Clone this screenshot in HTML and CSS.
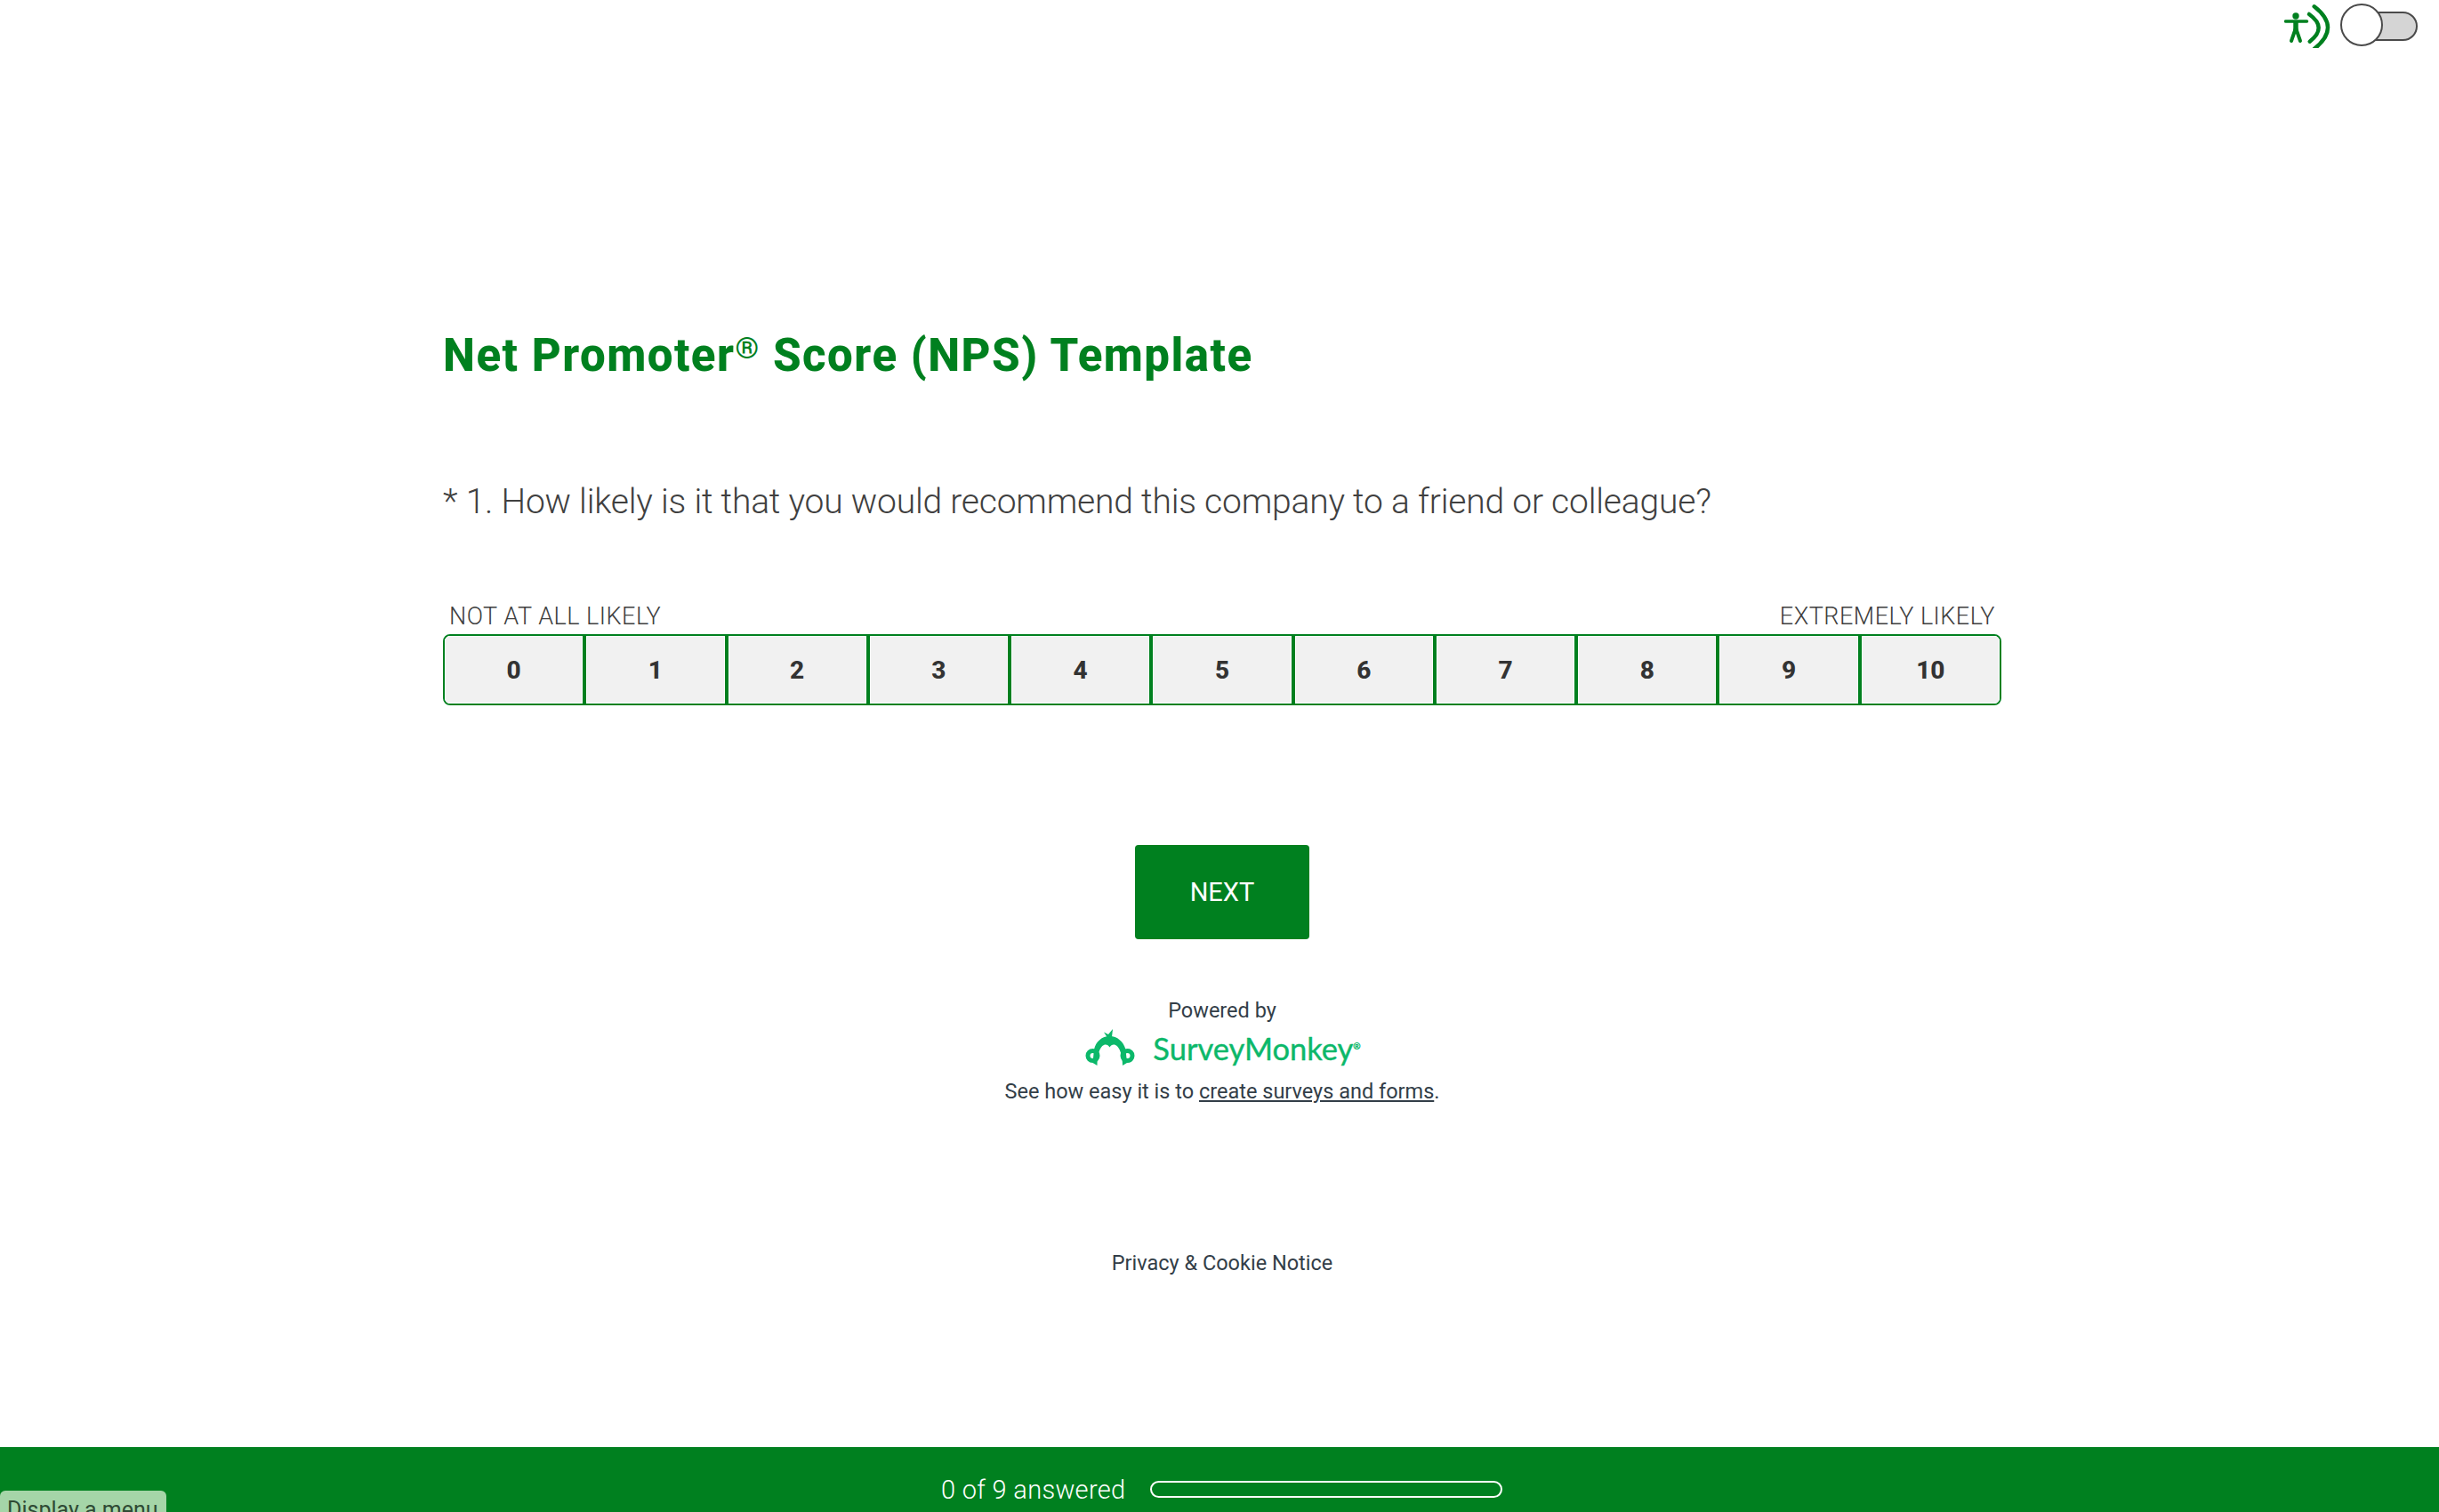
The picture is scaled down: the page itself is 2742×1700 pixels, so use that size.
FILE: index.html
```html
<!DOCTYPE html>
<html lang="en">
<head>
    <meta charset="UTF-8">
    <title>Net Promoter Score (NPS) Template</title>
    <link rel="stylesheet" href="styles.css">
</head>
<body>
    <!-- Accessibility toggle -->
    <div class="a11y-bar">
        <svg class="a11y-icon" width="52" height="52" viewBox="0 -4 52 52" fill="none">
            <circle cx="13" cy="12" r="3.700" fill="#00801f"/>
            <path d="M1.500 18 L25.500 18" stroke="#00801f" stroke-width="3.500" stroke-linecap="round"/>
            <path d="M13 18 V29" stroke="#00801f" stroke-width="5.500"/>
            <path d="M12.500 27 L8 40 M13.500 27 L18 40" stroke="#00801f" stroke-width="4" stroke-linecap="round"/>
            <path d="M28 10 Q49 25 28.700 40.700" stroke="#00801f" stroke-width="4.500" stroke-linecap="round"/>
            <path d="M33.700 1.300 Q64.300 25 33.700 49" stroke="#00801f" stroke-width="4.500" stroke-linecap="round"/>
        </svg>
        <div class="a11y-toggle">
            <span class="a11y-knob"></span>
        </div>
    </div>

    <main class="survey">
        <h1 class="survey-title">Net Promoter<sup class="reg">®</sup> Score (NPS) Template</h1>
        <p class="question">* 1. How likely is it that you would recommend this company to a friend or colleague?</p>

        <div class="scale-labels">
            <span>NOT AT ALL LIKELY</span>
            <span>EXTREMELY LIKELY</span>
        </div>
        <div class="scale">
            <button class="scale-item">0</button>
            <button class="scale-item">1</button>
            <button class="scale-item">2</button>
            <button class="scale-item">3</button>
            <button class="scale-item">4</button>
            <button class="scale-item">5</button>
            <button class="scale-item">6</button>
            <button class="scale-item">7</button>
            <button class="scale-item">8</button>
            <button class="scale-item">9</button>
            <button class="scale-item">10</button>
        </div>

        <div class="actions">
            <button class="next-btn">NEXT</button>
        </div>

        <div class="powered">
            <div class="powered-by">Powered by</div>
            <div class="brand">
                <svg class="brand-mark" width="60" height="44" viewBox="0 0 56 44">
                    <path fill="#0cb86a" d="M10 23 C12 14 19 8 27.500 8 C36 8 43 14 45.500 23 L47 38 L42 41 C42 30 39 20 34 18 C31.500 17 29 18 27.500 20.500 C26 18 23.500 17 21 18 C16 20 13.500 30 13.500 41 L8.500 38 Z"/>
                    <path fill="#0cb86a" d="M24.500 9 L21 3.500 L26 6 L31 0 L30 9 Z"/>
                    <circle cx="8.500" cy="30" r="5.500" fill="none" stroke="#0cb86a" stroke-width="5"/>
                    <circle cx="47.500" cy="30" r="5.500" fill="none" stroke="#0cb86a" stroke-width="5"/>
                </svg>
                <span class="brand-name">SurveyMonkey<sup class="brand-reg">®</sup></span>
            </div>
            <div class="powered-text">See how easy it is to <a href="#">create surveys and forms</a>.</div>
        </div>

        <div class="privacy">Privacy &amp; Cookie Notice</div>
    </main>

    <footer class="progress-bar">
        <span class="progress-text">0 of 9 answered</span>
        <span class="progress-track"></span>
    </footer>

    <button class="menu-btn">Display a menu</button>
</body>
</html>
```

FILE: styles.css
```css
/* NPS survey page */
html, body {
    height: 100%;
}

body {
    margin: 0;
    height: 1700px;
    overflow: hidden;
    display: flex;
    flex-direction: column;
    position: relative;
    background: #fff;
    color: #333e48;
    font-family: Roboto, "Liberation Sans", sans-serif;
}

.a11y-bar {
    display: flex;
    justify-content: flex-end;
    align-items: center;
    gap: 13px;
    height: 56px;
    padding: 0 24px 0 0;
}

.a11y-toggle {
    position: relative;
    width: 85px;
    height: 33px;
    margin-top: 3px;
    box-sizing: border-box;
    background: #d5d5d5;
    border: 2px solid #4a4a4a;
    border-radius: 17px;
}

.a11y-knob {
    position: absolute;
    left: -4px;
    top: -11px;
    width: 48px;
    height: 48px;
    box-sizing: border-box;
    background: #fff;
    border: 2px solid #4a4a4a;
    border-radius: 50%;
}

.survey {
    flex: 1;
    width: 1752px;
    margin-left: 498px;
}

.survey-title {
    margin: 314px 0 0;
    font-size: 51px;
    line-height: 60px;
    font-weight: 800;
    color: #00801f;
    letter-spacing: 1.5px;
}

.reg {
    font-size: 34px;
    line-height: 0;
    vertical-align: 14px;
}

.question {
    margin: 104px 0 0;
    font-size: 39px;
    line-height: 60px;
    font-weight: 300;
    color: #404040;
    letter-spacing: -0.2px;
}

.scale-labels {
    display: flex;
    justify-content: space-between;
    margin-top: 81px;
    padding: 0 7px 2px;
    font-size: 27px;
    line-height: 36px;
    font-weight: 300;
    letter-spacing: 0.5px;
    color: #404040;
}

.scale {
    display: flex;
    height: 80px;
    box-sizing: border-box;
    border: 2px solid #00801f;
    border-radius: 8px;
    overflow: hidden;
}

.scale-item {
    flex: 1;
    border: none;
    border-right: 4px solid #00801f;
    background: #f1f1f1;
    box-shadow: inset 0 0 0 1px #fff;
    font-family: inherit;
    font-size: 28px;
    font-weight: 800;
    color: #333;
}

.scale-item:last-child {
    border-right: none;
}

.actions {
    display: flex;
    justify-content: center;
    margin-top: 157px;
}

.next-btn {
    width: 196px;
    height: 106px;
    border: none;
    border-radius: 4px;
    background: #00801f;
    color: #fff;
    font-family: inherit;
    font-size: 29px;
}

.powered {
    margin-top: 64px;
    text-align: center;
    font-size: 23.500px;
    line-height: 32px;
    color: #333e48;
}

.brand {
    display: flex;
    justify-content: center;
    align-items: center;
    gap: 18px;
    height: 46px;
    margin-top: 4px;
}

.brand-name {
    font-family: Lato, sans-serif;
    font-size: 34.500px;
    -webkit-text-stroke: 0.4px #0cb86a;
    color: #0cb86a;
}

.brand-reg {
    font-size: 10px;
    line-height: 0;
    vertical-align: 12px;
}

.powered-text {
    margin-top: 9px;
}

.powered-text a {
    color: inherit;
}

.privacy {
    margin-top: 161px;
    text-align: center;
    font-size: 23.500px;
    line-height: 32px;
}

.progress-bar {
    display: flex;
    align-items: center;
    gap: 28px;
    height: 73px;
    padding: 22px 0 0 1058px;
    box-sizing: border-box;
    background: #00801f;
    color: #fff;
}

.progress-text {
    font-size: 29px;
    font-weight: 300;
    letter-spacing: 0.3px;
}

.progress-track {
    width: 396px;
    height: 19px;
    box-sizing: border-box;
    border: 2px solid #fff;
    border-radius: 10px;
}

.menu-btn {
    position: absolute;
    left: 0;
    top: 1676px;
    width: 187px;
    height: 42px;
    padding: 0 0 0 8px;
    border: none;
    border-radius: 6px 6px 0 0;
    background: #a5d5a8;
    color: #2f4a34;
    font-family: Roboto, sans-serif;
    font-size: 25px;
    text-align: left;
}
```
